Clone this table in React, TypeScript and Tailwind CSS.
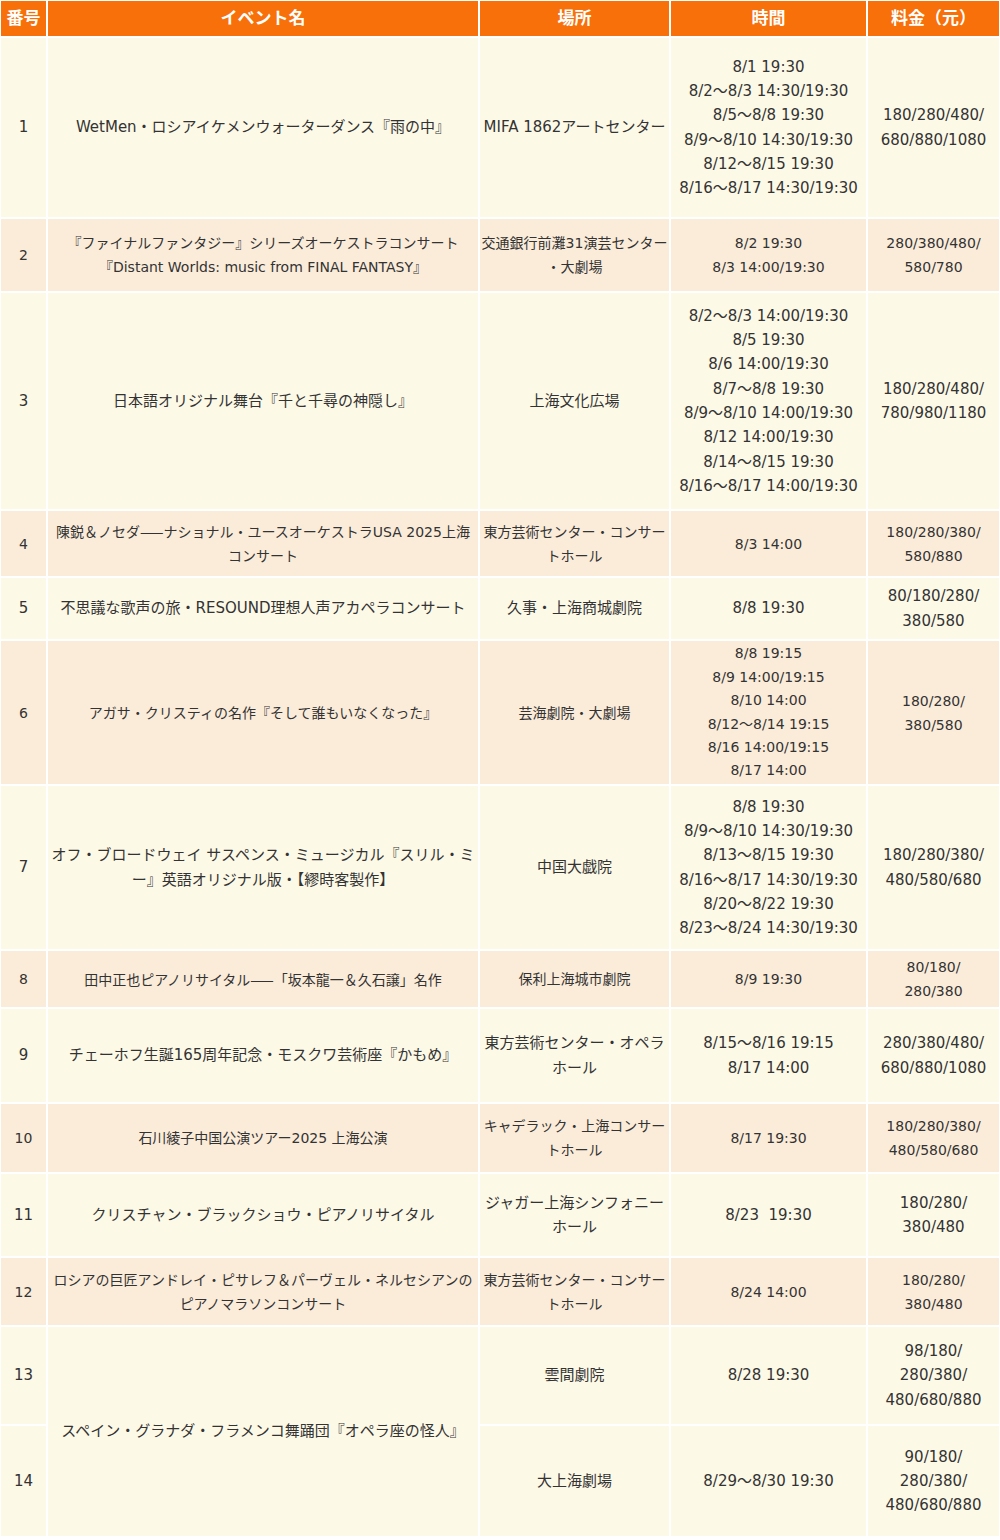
import React from "react";

type Row = {
  no: string;
  name?: string[];
  venue: string[];
  time: string[];
  price: string[];
  even: boolean;
  span?: boolean;
};

const rows: Row[] = [
  {
    no: "1",
    name: ["WetMen・ロシアイケメンウォーターダンス『雨の中』"],
    venue: ["MIFA 1862アートセンター"],
    time: ["8/1 19:30", "8/2～8/3 14:30/19:30", "8/5～8/8 19:30", "8/9～8/10 14:30/19:30", "8/12～8/15 19:30", "8/16～8/17 14:30/19:30"],
    price: ["180/280/480/", "680/880/1080"],
    even: false,
  },
  {
    no: "2",
    name: ["『ファイナルファンタジー』シリーズオーケストラコンサート", "『Distant Worlds: music from FINAL FANTASY』"],
    venue: ["交通銀行前灘31演芸センター", "・大劇場"],
    time: ["8/2 19:30", "8/3 14:00/19:30"],
    price: ["280/380/480/", "580/780"],
    even: true,
  },
  {
    no: "3",
    name: ["日本語オリジナル舞台『千と千尋の神隠し』"],
    venue: ["上海文化広場"],
    time: ["8/2～8/3 14:00/19:30", "8/5 19:30", "8/6 14:00/19:30", "8/7～8/8 19:30", "8/9～8/10 14:00/19:30", "8/12 14:00/19:30", "8/14～8/15 19:30", "8/16～8/17 14:00/19:30"],
    price: ["180/280/480/", "780/980/1180"],
    even: false,
  },
  {
    no: "4",
    name: ["陳鋭＆ノセダ——ナショナル・ユースオーケストラUSA 2025上海", "コンサート"],
    venue: ["東方芸術センター・コンサー", "トホール"],
    time: ["8/3 14:00"],
    price: ["180/280/380/", "580/880"],
    even: true,
  },
  {
    no: "5",
    name: ["不思議な歌声の旅・RESOUND理想人声アカペラコンサート"],
    venue: ["久事・上海商城劇院"],
    time: ["8/8 19:30"],
    price: ["80/180/280/", "380/580"],
    even: false,
  },
  {
    no: "6",
    name: ["アガサ・クリスティの名作『そして誰もいなくなった』"],
    venue: ["芸海劇院・大劇場"],
    time: ["8/8 19:15", "8/9 14:00/19:15", "8/10 14:00", "8/12～8/14 19:15", "8/16 14:00/19:15", "8/17 14:00"],
    price: ["180/280/", "380/580"],
    even: true,
  },
  {
    no: "7",
    name: ["オフ・ブロードウェイ サスペンス・ミュージカル『スリル・ミ", "ー』英語オリジナル版・【繆時客製作】"],
    venue: ["中国大戯院"],
    time: ["8/8 19:30", "8/9～8/10 14:30/19:30", "8/13～8/15 19:30", "8/16～8/17 14:30/19:30", "8/20～8/22 19:30", "8/23～8/24 14:30/19:30"],
    price: ["180/280/380/", "480/580/680"],
    even: false,
  },
  {
    no: "8",
    name: ["田中正也ピアノリサイタル——「坂本龍一＆久石譲」名作"],
    venue: ["保利上海城市劇院"],
    time: ["8/9 19:30"],
    price: ["80/180/", "280/380"],
    even: true,
  },
  {
    no: "9",
    name: ["チェーホフ生誕165周年記念・モスクワ芸術座『かもめ』"],
    venue: ["東方芸術センター・オペラ", "ホール"],
    time: ["8/15～8/16 19:15", "8/17 14:00"],
    price: ["280/380/480/", "680/880/1080"],
    even: false,
  },
  {
    no: "10",
    name: ["石川綾子中国公演ツアー2025 上海公演"],
    venue: ["キャデラック・上海コンサー", "トホール"],
    time: ["8/17 19:30"],
    price: ["180/280/380/", "480/580/680"],
    even: true,
  },
  {
    no: "11",
    name: ["クリスチャン・ブラックショウ・ピアノリサイタル"],
    venue: ["ジャガー上海シンフォニー", "ホール"],
    time: ["8/23\u00a0 19:30"],
    price: ["180/280/", "380/480"],
    even: false,
  },
  {
    no: "12",
    name: ["ロシアの巨匠アンドレイ・ピサレフ＆パーヴェル・ネルセシアンの", "ピアノマラソンコンサート"],
    venue: ["東方芸術センター・コンサー", "トホール"],
    time: ["8/24 14:00"],
    price: ["180/280/", "380/480"],
    even: true,
  },
  {
    no: "13",
    name: ["スペイン・グラナダ・フラメンコ舞踊団『オペラ座の怪人』"],
    span: true,
    venue: ["雲間劇院"],
    time: ["8/28 19:30"],
    price: ["98/180/", "280/380/", "480/680/880"],
    even: false,
  },
  {
    no: "14",
    venue: ["大上海劇場"],
    time: ["8/29～8/30 19:30"],
    price: ["90/180/", "280/380/", "480/680/880"],
    even: false,
  },
];

const font = { fontFamily: '"DejaVu Sans", "Noto Sans CJK JP", sans-serif' };

function Line({ text }: { text: string }) {
  const parts = text.split("——");
  return (
    <div className="whitespace-nowrap">
      {parts.map((p, i) => (
        <React.Fragment key={i}>
          {i > 0 && <span className="font-['Noto_Sans_CJK_JP',sans-serif]">——</span>}
          {p}
        </React.Fragment>
      ))}
    </div>
  );
}

function Cell({ lines, even, size, extra = "" }: { lines: string[]; even: boolean; size: string; extra?: string }) {
  return (
    <div
      className={`flex flex-col items-center justify-center text-center text-[#333333] ${size} ${
        even ? "bg-[#fbecda]" : "bg-[#fdf9e7]"
      } ${extra}`}
    >
      {lines.map((l, i) => (
        <Line key={i} text={l} />
      ))}
    </div>
  );
}

export default function App() {
  return (
    <div className="w-[1000px] bg-white p-px" style={font}>
      <div className="grid grid-cols-[45px_430px_189px_195px_131px] grid-rows-[35px_179px_72px_216px_65px_61px_143px_163px_56px_93px_68px_82px_67px_97px_110px] gap-[2px]">
        {["番号", "イベント名", "場所", "時間", "料金（元）"].map((h) => (
          <div
            key={h}
            className="flex items-center justify-center bg-[#f7700a] text-[17px] font-bold text-white whitespace-nowrap"
          >
            {h}
          </div>
        ))}
        {rows.map((r) => {
          const size = r.even ? "text-[14px] leading-[24px]" : "text-[15px] leading-[24.3px]";
          const sizeTime = r.no === "6" ? "text-[14px] leading-[23.4px]" : size;
          return (
            <React.Fragment key={r.no}>
              <Cell lines={[r.no]} even={r.even} size={size} />
              {r.name && <Cell lines={r.name} even={r.even} size={size} extra={r.span ? "row-span-2" : ""} />}
              <Cell lines={r.venue} even={r.even} size={size} />
              <Cell lines={r.time} even={r.even} size={sizeTime} />
              <Cell lines={r.price} even={r.even} size={size} />
            </React.Fragment>
          );
        })}
      </div>
    </div>
  );
}
